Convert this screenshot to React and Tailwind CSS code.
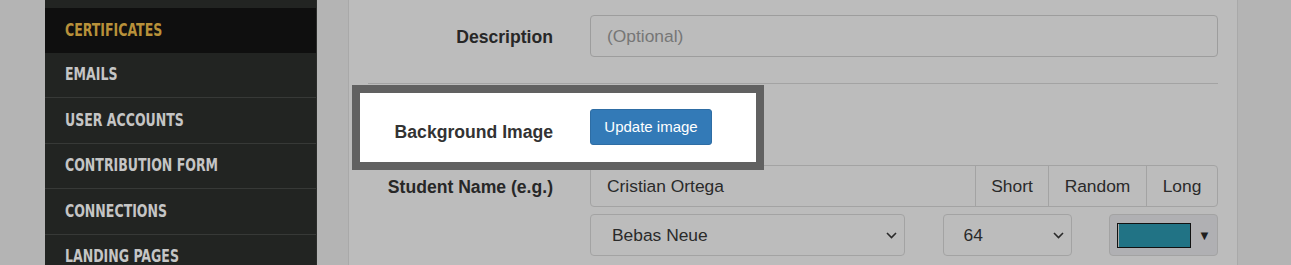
import React from 'react';

const navFont = "font-['DejaVu_Sans_Condensed','Liberation_Sans',sans-serif]";

const Chevron = () => (
  <svg width="11" height="7" viewBox="0 0 11 7" className="shrink-0">
    <polyline points="1,1 5.5,5.5 10,1" fill="none" stroke="#2a2a2a" strokeWidth="1.6" />
  </svg>
);

const NavItem = ({ label, active }) => (
  <div
    className={
      active
        ? `flex items-center h-[44.5px] pl-5 bg-[#0f0f0f] text-[#b8913a] text-[17px] font-bold ${navFont}`
        : `flex items-center h-[45.5px] pl-5 border-b border-[#373937] text-[#c5c5c5] text-[17px] font-bold ${navFont}`
    }
  >
    <span className="inline-block origin-left scale-x-[0.82] whitespace-nowrap">{label}</span>
  </div>
);

const Sidebar = () => (
  <div className="w-[272px] shrink-0 bg-[#222422] border-r border-[#2c2e2c] h-full">
    <div className="h-2" />
    <NavItem label="CERTIFICATES" active />
    <NavItem label="EMAILS" />
    <NavItem label="USER ACCOUNTS" />
    <NavItem label="CONTRIBUTION FORM" />
    <NavItem label="CONNECTIONS" />
    <NavItem label="LANDING PAGES" />
  </div>
);

const Label = ({ children, className = '' }) => (
  <div className={`w-[185px] shrink-0 text-right font-bold text-[17.6px] text-[#272727] ${className}`}>{children}</div>
);

export default function App() {
  return (
    <div className="flex h-[265px] overflow-hidden bg-[#b4b4b4] font-['Liberation_Sans',Arial,sans-serif]">
      <div className="w-[45px] shrink-0" />
      <Sidebar />
      <div className="w-[31px] shrink-0" />
      <div className="w-[890px] shrink-0 bg-[#bcbcbc] border-x border-[#a9a9a9] pt-[15px] px-[19px]">
        {/* Description */}
        <div className="flex items-center gap-[37px]">
          <Label className="mt-[2px]">Description</Label>
          <div className="flex-1 h-[42px] rounded-[4px] border border-[#9d9d9d] flex items-center px-4 text-[17.4px] text-[#767676]">
            (Optional)
          </div>
        </div>

        <div className="mt-[26px] border-t border-[#a3a3a3]" />

        {/* Background image (highlighted) */}
        <div className="relative mt-[25px] h-[36px]">
          <div className="absolute -top-[24px] -bottom-[25px] -left-[16px] w-[412px] border-8 border-[#616161] bg-white" />
          <div className="relative flex items-center h-full gap-[37px]">
            <Label className="text-[#333333] mt-[10px]">Background Image</Label>
            <button className="h-[36px] w-[122px] rounded-[3px] bg-[#337ab7] border border-[#2e6da4] text-white text-[15px]">
              Update image
            </button>
          </div>
        </div>

        {/* Student name */}
        <div className="mt-[20px] flex items-center gap-[37px]">
          <Label className="mt-[2px]">Student Name (e.g.)</Label>
          <div className="flex h-[42px] w-[628px] rounded-[4px] border border-[#a3a3a3] text-[17.4px] text-[#2a2a2a]">
            <div className="flex-1 flex items-center px-4">Cristian Ortega</div>
            <div className="w-[73px] flex items-center justify-center border-l border-[#a3a3a3]">Short</div>
            <div className="w-[98px] flex items-center justify-center border-l border-[#a3a3a3]">Random</div>
            <div className="w-[71px] flex items-center justify-center border-l border-[#a3a3a3]">Long</div>
          </div>
        </div>

        {/* Font, size, colour */}
        <div className="mt-[7px] flex gap-[37px]">
          <div className="w-[185px] shrink-0" />
          <div className="w-[628px] flex justify-between text-[17.4px] text-[#2a2a2a]">
            <div className="w-[315px] h-[42px] rounded-[4px] border border-[#a3a3a3] flex items-center justify-between pl-[21px] pr-[7px]">
              <span>Bebas Neue</span>
              <Chevron />
            </div>
            <div className="w-[129px] h-[42px] rounded-[4px] border border-[#a3a3a3] flex items-center justify-between pl-[20px] pr-[7px]">
              <span>64</span>
              <Chevron />
            </div>
            <div className="w-[109px] h-[42px] rounded-[4px] border border-[#a3a3a3] bg-[#b0b0b3] flex items-center pl-[7px] gap-[7px]">
              <div className="w-[74px] h-[25px] border border-[#111111] bg-[#217385] shadow-[inset_1px_0_0_#a9a9a9]" />
              <span className="text-[13px] text-[#1f1f1f] leading-none">▼</span>
            </div>
          </div>
        </div>
      </div>
      <div className="flex-1" />
    </div>
  );
}
